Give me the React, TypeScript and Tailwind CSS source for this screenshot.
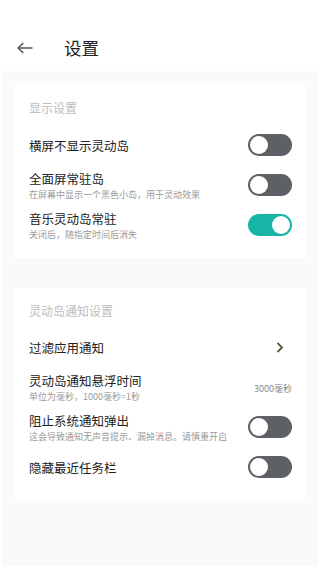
import React from 'react';

const font = { fontFamily: '"Noto Sans CJK SC", "Noto Sans", sans-serif' };

function Toggle({ on }: { on: boolean }) {
  return (
    <div
      className={`flex h-[22px] w-[44px] shrink-0 items-center rounded-full p-[2px] ${
        on ? 'justify-end bg-[#17b5a5]' : 'justify-start bg-[#5d6065]'
      }`}
    >
      <div className="h-[18px] w-[18px] rounded-full bg-white" />
    </div>
  );
}

function Row({ title, sub, children }: { title: string; sub?: string; children?: React.ReactNode }) {
  return (
    <div className="flex h-[40px] items-center justify-between pl-[15px] pr-[14px]">
      <div className="flex flex-col">
        <span className="text-[12.5px] leading-[19px] text-[#222]">{title}</span>
        {sub && <span className="text-[9px] leading-[13px] text-[#9a9a9a]">{sub}</span>}
      </div>
      {children}
    </div>
  );
}

function SectionTitle({ children }: { children: React.ReactNode }) {
  return (
    <div className="px-[15px] text-[12px] leading-[20px] text-[#bdbdbd]">{children}</div>
  );
}

export default function App() {
  return (
    <div className="flex h-[568px] w-[320px] flex-col bg-white" style={font}>
      {/* Header */}
      <header className="flex h-[71px] shrink-0 items-center pl-[17px] pt-[24px]">
        <svg width="16" height="12" viewBox="0 0 16 12" fill="none" stroke="#555" strokeWidth="1.5">
          <path d="M15.5 6H1.2M6.2 1L1.2 6l5 5" />
        </svg>
        <h1 className="ml-[31px] text-[17.5px] leading-[24px] text-[#222]">设置</h1>
      </header>

      {/* Body */}
      <div className="mx-[2px] mb-[2px] flex flex-1 flex-col gap-[30px] bg-[#fafafa] px-[12px] pt-[13px]">
        <section className="bg-white pb-[13px] pt-[14px]">
          <SectionTitle>显示设置</SectionTitle>
          <div className="mt-[7px]">
            <Row title="横屏不显示灵动岛">
              <Toggle on={false} />
            </Row>
            <Row title="全面屏常驻岛" sub="在屏幕中显示一个黑色小岛，用于灵动效果">
              <Toggle on={false} />
            </Row>
            <Row title="音乐灵动岛常驻" sub="关闭后，随指定时间后消失">
              <Toggle on={true} />
            </Row>
          </div>
        </section>

        <section className="bg-white pb-[13px] pt-[13px]">
          <SectionTitle>灵动岛通知设置</SectionTitle>
          <div className="mt-[6px]">
            <Row title="过滤应用通知">
              <svg width="8" height="11" viewBox="0 0 8 11" fill="none" stroke="#565b40" strokeWidth="1.8" className="mr-[8px]">
                <path d="M1.5 1l4.5 4.5L1.5 10" />
              </svg>
            </Row>
            <Row title="灵动岛通知悬浮时间" sub="单位为毫秒，1000毫秒=1秒">
              <span className="mt-[4px] text-[9px] text-[#8a8a8a]">3000毫秒</span>
            </Row>
            <Row title="阻止系统通知弹出" sub="这会导致通知无声音提示、漏掉消息。请慎重开启">
              <Toggle on={false} />
            </Row>
            <Row title="隐藏最近任务栏">
              <Toggle on={false} />
            </Row>
          </div>
        </section>
      </div>
    </div>
  );
}
